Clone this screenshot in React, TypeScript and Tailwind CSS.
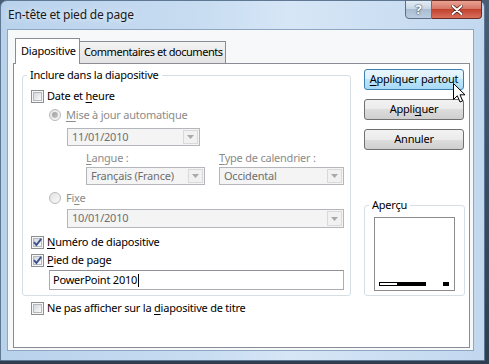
import React from "react";

const U = ({ children }: { children: React.ReactNode }) => (
  <span className="underline underline-offset-[2px] decoration-[1px]">{children}</span>
);

function CheckBox({ checked = false }: { checked?: boolean }) {
  return (
    <span className="relative block w-[13px] h-[13px] shrink-0 border border-[#8e8f8f] bg-[#f6f6f6] p-[1px]">
      <span className="block w-full h-full border border-[#b4b9bf] bg-gradient-to-br from-[#d3d7dc] to-[#fafafa]" />
      {checked && (
        <svg className="absolute left-0 top-0" width="11" height="11" viewBox="0 0 11 11">
          <path d="M2 5.2 L4.4 8 L9.2 1.8" fill="none" stroke="#3d4f8c" strokeWidth="1.9" />
        </svg>
      )}
    </span>
  );
}

function Radio({ selected = false }: { selected?: boolean }) {
  return (
    <span className="flex w-[12px] h-[12px] shrink-0 rounded-full border border-[#b9b9b9] bg-gradient-to-br from-[#e2e2e2] to-[#fafafa] items-center justify-center">
      {selected && <span className="block w-[6px] h-[6px] rounded-full bg-gradient-to-br from-[#9d9d9d] to-[#c8c8c8]" />}
    </span>
  );
}

function Combo({ text, w }: { text: string; w: string }) {
  return (
    <div className={`flex h-full border border-[#b3b7bb] bg-[#f4f4f4] ${w}`}>
      <span className="flex-1 pl-[4px] text-[#6f6f6f] leading-[16px] whitespace-nowrap">{text}</span>
      <span className="flex w-[15px] my-[1px] mr-[1px] border border-[#d9d9d9] bg-[#f1f1f1] items-center justify-center">
        <svg width="7" height="4" viewBox="0 0 7 4">
          <path d="M0 0 H7 L3.5 4 Z" fill="#a9a9a9" />
        </svg>
      </span>
    </div>
  );
}

function Btn({ children, hover = false }: { children: React.ReactNode; hover?: boolean }) {
  return (
    <div
      className={`flex h-[21px] w-[100px] items-center justify-center rounded-[3px] border text-black whitespace-nowrap ${
        hover
          ? "border-[#3c7fb1] bg-[linear-gradient(to_bottom,#eaf6fd_0%,#d9f0fc_50%,#bee6fd_50%,#a7d9f5_100%)]"
          : "border-[#707070] bg-[linear-gradient(to_bottom,#f2f2f2_0%,#ebebeb_50%,#dddddd_50%,#cfcfcf_100%)]"
      }`}
    >
      {children}
    </div>
  );
}

export default function App() {
  return (
    <div className="w-[489px] h-[364px] overflow-hidden bg-[linear-gradient(to_bottom,#4b5d73,#2f3d4e)] font-['Noto_Sans',sans-serif] text-[11px] tracking-[-0.22px] text-black">
      {/* window */}
      <div className="relative w-[485px] h-[361px] rounded-t-[7px] border border-[#5f7894] bg-[linear-gradient(to_right,#b9d2ec_0%,#c7dcf1_40%,#d6e6f6_60%,#c2d8ef_100%)]">
        {/* title bar */}
        <div className="flex h-[28px] items-start">
          <span className="ml-[7px] mt-[6px] text-[12px] leading-[16px] text-[#1a1a1a] [text-shadow:0_0_6px_#ffffff] whitespace-nowrap">
            En-tête et pied de page
          </span>
          <div className="ml-auto mr-[2px] mt-[-1px] flex">
            <div className="flex w-[27px] h-[19px] items-center justify-center rounded-bl-[4px] border border-[#5d6f86] bg-[linear-gradient(to_bottom,#e3ecf5_0%,#c8d7e6_45%,#a9bdd2_50%,#bccde0_100%)]">
              <span className="text-[13px] font-bold leading-none text-white [text-shadow:0_0_2px_#2c3e55,0_0_1px_#2c3e55]">?</span>
            </div>
            <div className="flex w-[50px] h-[19px] items-center justify-center rounded-br-[4px] border border-l-0 border-[#6b2c28] bg-[linear-gradient(to_bottom,#e8a293_0%,#d77766_45%,#c2422e_50%,#d8705c_100%)]">
              <svg width="12" height="10" viewBox="0 0 12 10">
                <path d="M1.5 1 L10.5 9 M10.5 1 L1.5 9" stroke="#4a1b14" strokeWidth="3.4" strokeLinecap="round" />
                <path d="M1.5 1 L10.5 9 M10.5 1 L1.5 9" stroke="#ffffff" strokeWidth="2" strokeLinecap="round" />
              </svg>
            </div>
          </div>
        </div>

        {/* client area */}
        <div className="ml-[6px] w-[467px] h-[322px] border border-[#8ea6c2] bg-[#f7f8f9] pt-[7px] pl-[5px]">
          {/* tabs */}
          <div className="flex items-end h-[26px] pl-[2px] whitespace-nowrap">
            <div className="relative z-10 flex h-[26px] w-[65px] mb-[-1px] items-start border border-b-0 border-[#898c95] bg-white pl-[5px] pt-[4px]">
              Diapositive
            </div>
            <div className="flex h-[22px] w-[146px] items-start border border-l-0 border-b-0 border-[#898c95] bg-[linear-gradient(to_bottom,#f3f3f3,#e3e3e3)] pl-[4px] pt-[2px] tracking-[-0.45px]">
              Commentaires et documents
            </div>
          </div>
          {/* tab panel */}
          <div className="w-[457px] h-[285px] border border-[#898c95] bg-white pl-[8px] pt-[5px]">
            <div className="flex">
              {/* group Inclure */}
              <div className="relative mt-[6px] w-[329px] h-[221px] rounded-[3px] border border-[#d5dfe5] pl-[8px] pt-[12px] whitespace-nowrap">
                <span className="absolute left-[4px] top-[-9px] bg-white px-[3px] leading-[16px]">Inclure dans la diapositive</span>
                <div className="flex h-[16px] items-center gap-[3px]">
                  <CheckBox />
                  <span>
                    Date et <U>h</U>eure
                  </span>
                </div>
                <div className="mt-[3px] flex h-[16px] items-center gap-[5px] pl-[18px] text-[#8b8b8b]">
                  <Radio selected />
                  <span>
                    <U>M</U>ise à jour automatique
                  </span>
                </div>
                <div className="mt-[5px] h-[18px] pl-[36px]">
                  <Combo text="11/01/2010" w="w-[133px]" />
                </div>
                <div className="mt-[5px] flex h-[14px] items-center pl-[55px] text-[#8b8b8b] leading-[14px]">
                  <span className="w-[133px]">
                    <U>L</U>angue :
                  </span>
                  <span>
                    <U>T</U>ype de calendrier :
                  </span>
                </div>
                <div className="mt-[2px] flex h-[18px] gap-[14px] pl-[55px]">
                  <Combo text="Français (France)" w="w-[119px]" />
                  <Combo text="Occidental" w="w-[125px]" />
                </div>
                <div className="mt-[5px] flex h-[16px] items-center gap-[5px] pl-[18px] text-[#8b8b8b]">
                  <Radio />
                  <span>
                    Fi<U>x</U>e
                  </span>
                </div>
                <div className="mt-[3px] h-[19px] pl-[36px]">
                  <Combo text="10/01/2010" w="w-[277px]" />
                </div>
                <div className="mt-[6px] flex h-[16px] items-center gap-[3px]">
                  <CheckBox checked />
                  <span>
                    <U>N</U>uméro de diapositive
                  </span>
                </div>
                <div className="mt-[2px] flex h-[16px] items-center gap-[3px]">
                  <CheckBox checked />
                  <span>
                    <U>P</U>ied de page
                  </span>
                </div>
                <div className="mt-[2px] ml-[18px] flex h-[20px] w-[295px] items-center border border-[#abadb3] border-t-[#8e9196] bg-white pl-[3px]">
                  <span>PowerPoint 2010</span>
                  <span className="ml-[1px] block h-[13px] w-[1px] bg-black" />
                </div>
              </div>

              {/* right column */}
              <div className="relative ml-[13px] flex w-[100px] flex-col">
                <Btn hover>
                  <span>
                    <U>A</U>ppliquer partout
                  </span>
                </Btn>
                <div className="mt-[9px]">
                  <Btn>
                    <span>
                      Appli<U>q</U>uer
                    </span>
                  </Btn>
                </div>
                <div className="mt-[9px]">
                  <Btn>Annuler</Btn>
                </div>
                <div className="relative mt-[55px] h-[91px] w-[101px] rounded-[3px] border border-[#d5dfe5] pl-[9px] pt-[11px]">
                  <span className="absolute left-[4px] top-[-9px] bg-white px-[3px] leading-[16px]">Aperçu</span>
                  <div className="flex h-[74px] w-[81px] flex-col justify-end border border-[#8c8c8c] bg-white pb-[4px] pl-[4px]">
                    <div className="flex h-[4px] items-stretch">
                      <span className="block w-[19px] border border-black bg-white" />
                      <span className="block w-[28px] bg-black" />
                      <span className="ml-[17px] block w-[6px] bg-black" />
                    </div>
                  </div>
                </div>
                {/* mouse cursor */}
                <svg className="absolute left-[89px] top-[14px]" width="14" height="21" viewBox="0 0 14 21">
                  <path d="M0.5 0.5 L0.5 16.5 L4.3 12.8 L7 19 L9.6 17.9 L7 11.8 L12 11.8 Z" fill="#ffffff" stroke="#000000" strokeWidth="1" strokeLinejoin="miter" />
                </svg>
              </div>
            </div>
            <div className="mt-[4px] flex h-[17px] items-center gap-[3px] pl-[9px] whitespace-nowrap">
              <CheckBox />
              <span>
                Ne pas afficher sur la <U>d</U>iapositive de titre
              </span>
            </div>
          </div>
        </div>
      </div>
    </div>
  );
}
